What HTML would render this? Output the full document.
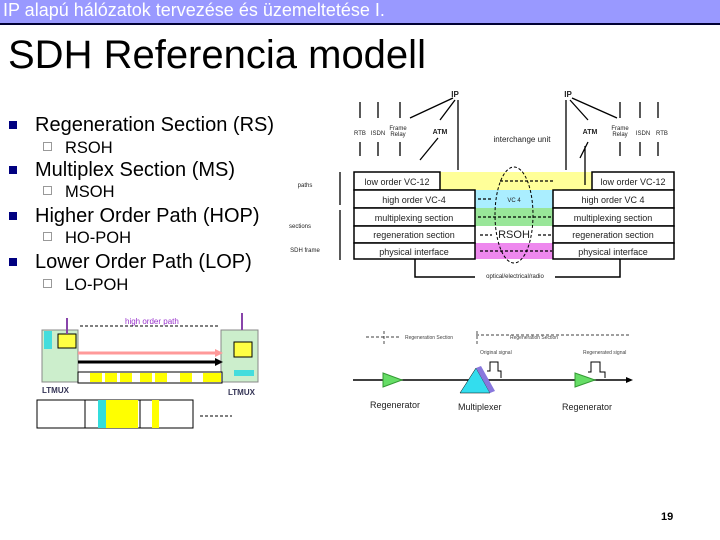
<!DOCTYPE html>
<html><head><meta charset="utf-8"><style>
body{margin:0;width:720px;height:540px;background:#fff;position:relative;overflow:hidden;font-family:"Liberation Sans",sans-serif}
.hdr{position:absolute;left:0;top:0;width:717px;height:23px;background:#9999ff;border-bottom:2px solid #000033;color:#fff;font-size:18px;line-height:21px;padding-left:3px;box-sizing:content-box}
.t{position:absolute;left:8px;top:33px;font-size:40px;color:#000}
.b{position:absolute;font-size:20px;color:#000;white-space:nowrap}
.b i{position:absolute;left:-26px;top:7px;width:8px;height:8px;background:#000080}
.s{position:absolute;font-size:16.5px;color:#000;white-space:nowrap}
.s i{position:absolute;left:-22px;top:3px;width:9px;height:9px;border:1px solid #999;box-sizing:border-box}
svg{position:absolute;left:0;top:0}
</style></head><body>
<div class="hdr">IP alapú hálózatok tervezése és üzemeltetése I.</div>
<div class="t">SDH Referencia modell</div>
<div class="b" style="left:35px;top:114px"><i></i>Regeneration Section (RS)</div>
<div class="s" style="left:65px;top:139px"><i></i>RSOH</div>
<div class="b" style="left:35px;top:159px"><i></i>Multiplex Section (MS)</div>
<div class="s" style="left:65px;top:183px"><i></i>MSOH</div>
<div class="b" style="left:35px;top:205px"><i></i>Higher Order Path (HOP)</div>
<div class="s" style="left:65px;top:229px"><i></i>HO-POH</div>
<div class="b" style="left:35px;top:251px"><i></i>Lower Order Path (LOP)</div>
<div class="s" style="left:65px;top:276px"><i></i>LO-POH</div>
<svg width="720" height="540" font-family="Liberation Sans,sans-serif">
<!-- diagram 1 -->
<rect x="440" y="172" width="152" height="18" fill="#ffff99"/>
<rect x="475" y="190" width="78" height="18" fill="#aaeeff"/>
<rect x="475" y="208" width="78" height="18" fill="#99e699"/>
<rect x="475" y="243" width="78" height="16" fill="#ee88ee"/>
<g fill="#fff" stroke="#000" stroke-width="1.5">
<rect x="354" y="172" width="86" height="18"/><rect x="354" y="190" width="121" height="18"/><rect x="354" y="208" width="121" height="18"/><rect x="354" y="226" width="121" height="17"/><rect x="354" y="243" width="121" height="16"/>
<rect x="592" y="172" width="82" height="18"/><rect x="553" y="190" width="121" height="18"/><rect x="553" y="208" width="121" height="18"/><rect x="553" y="226" width="121" height="17"/><rect x="553" y="243" width="121" height="16"/>
</g>
<g font-size="9" text-anchor="middle" fill="#222">
<text x="397" y="185">low order VC-12</text><text x="414" y="203">high order VC-4</text><text x="414" y="221">multiplexing section</text><text x="414" y="238">regeneration section</text><text x="414" y="255">physical interface</text>
<text x="633" y="185">low order VC-12</text><text x="613" y="203">high order VC 4</text><text x="613" y="221">multiplexing section</text><text x="613" y="238">regeneration section</text><text x="613" y="255">physical interface</text>
<text x="514" y="238" font-size="11">RSOH</text><text x="514" y="202" font-size="6">VC 4</text>
<text x="522" y="142" font-size="8">interchange unit</text>
<text x="515" y="278" font-size="6">optical/electrical/radio</text>
<text x="305" y="187" font-size="6">paths</text><text x="300" y="228" font-size="6">sections</text><text x="305" y="252" font-size="6">SDH frame</text>
<text x="455" y="97" font-size="8" font-weight="bold">IP</text><text x="568" y="97" font-size="8" font-weight="bold">IP</text>
<text x="360" y="135" font-size="6">RTB</text><text x="378" y="135" font-size="6">ISDN</text><text x="398" y="130" font-size="6">Frame</text><text x="398" y="136" font-size="6">Relay</text><text x="440" y="134" font-size="7" font-weight="bold">ATM</text>
<text x="590" y="134" font-size="7" font-weight="bold">ATM</text><text x="620" y="130" font-size="6">Frame</text><text x="620" y="136" font-size="6">Relay</text><text x="643" y="135" font-size="6">ISDN</text><text x="662" y="135" font-size="6">RTB</text>
</g>
<ellipse cx="514" cy="215" rx="19" ry="48" fill="none" stroke="#000" stroke-dasharray="3,2"/>
<path d="M415 259V277H475M555 277H620V259" fill="none" stroke="#000" stroke-width="1.5"/>
<g stroke="#000" stroke-width="1.3" fill="none">
<path d="M360 102V118M378 102V118M400 102V118M360 142V156M378 142V156M400 142V156M458 100V170M438 138L420 160M455 100L440 120M453 98L410 118M566 170V100M580 158L588 142M588 120L570 100M617 118L572 98M620 156V142M640 156V142M658 156V142M620 118V102M640 118V102M658 118V102M585 185V146"/>
<path d="M500 181H555M478 199H492M478 217H552M480 235H492M538 235H552M480 251H552" stroke-dasharray="3,2"/>
<path d="M340 172V205M340 210V260" />
</g>
<!-- diagram 2 -->
<rect x="42" y="330" width="36" height="52" fill="#cceecc" stroke="#888"/>
<rect x="221" y="330" width="37" height="52" fill="#cceecc" stroke="#888"/>
<rect x="58" y="334" width="18" height="14" fill="#ffff44" stroke="#000"/>
<rect x="44" y="331" width="8" height="18" fill="#44dddd"/>
<rect x="234" y="342" width="18" height="15" fill="#ffff44" stroke="#000"/>
<rect x="234" y="370" width="20" height="6" fill="#44dddd"/>
<path d="M67 318V334" stroke="#8844aa" stroke-width="2"/>
<path d="M242 330V313" stroke="#8844aa" stroke-width="2"/>
<path d="M78 353H215" stroke="#ff9999" stroke-width="3"/><path d="M215 349L223 353L215 357Z" fill="#ff9999"/>
<path d="M78 362H215" stroke="#000" stroke-width="3"/><path d="M215 358L223 362L215 366Z" fill="#000"/>
<path d="M80 326H220" stroke="#000" stroke-dasharray="3,2"/>
<text x="125" y="324" font-size="8" fill="#9933cc">high order path</text>
<rect x="78" y="372" width="144" height="11" fill="#fff" stroke="#000"/>
<g fill="#ffff00"><rect x="90" y="373" width="12" height="9"/><rect x="105" y="373" width="12" height="9"/><rect x="120" y="373" width="12" height="9"/><rect x="140" y="373" width="12" height="9"/><rect x="155" y="373" width="12" height="9"/><rect x="180" y="373" width="12" height="9"/><rect x="203" y="373" width="18" height="9"/></g>
<text x="42" y="393" font-size="8" font-weight="bold" fill="#335">LTMUX</text>
<text x="228" y="395" font-size="8" font-weight="bold" fill="#335">LTMUX</text>
<rect x="37" y="400" width="156" height="28" fill="#fff" stroke="#000"/>
<rect x="98" y="400" width="8" height="28" fill="#33dddd"/><rect x="106" y="400" width="32" height="28" fill="#ffff00"/><rect x="152" y="400" width="7" height="28" fill="#ffff00"/>
<path d="M85 400V428M140 400V428" stroke="#000"/>
<path d="M200 416H232" stroke="#000" stroke-dasharray="3,2"/>
<!-- diagram 3 -->
<path d="M353 380H630" stroke="#000" stroke-width="1.5"/><path d="M626 377L633 380L626 383Z"/>
<path d="M383 373L402 380L383 387Z" fill="#66dd66" stroke="#393"/>
<path d="M575 373L595 380L575 387Z" fill="#66dd66" stroke="#393"/>
<path d="M476 368L490 393L460 393Z" fill="#33ddee" stroke="#000" stroke-width=".5"/>
<path d="M476 368L481 366L495 391L490 393Z" fill="#8877dd"/>
<path d="M487 371H490V362H498V371H501V378" fill="none" stroke="#000"/>
<path d="M588 372H591V362H600V372H605V378" fill="none" stroke="#000"/>
<path d="M366 337H400M476 335H630M384 331V345M477 331V345" stroke="#000" stroke-width=".7" stroke-dasharray="3,2"/>
<g font-size="5" fill="#444"><text x="405" y="339">Regeneration Section</text><text x="510" y="339">Regeneration Section</text><text x="480" y="354">Original signal</text><text x="583" y="354">Regenerated signal</text></g>
<g font-size="9" fill="#222"><text x="370" y="408">Regenerator</text><text x="458" y="410">Multiplexer</text><text x="562" y="410">Regenerator</text></g>
<text x="661" y="520" font-size="11" font-weight="bold">19</text>
</svg>
</body></html>
